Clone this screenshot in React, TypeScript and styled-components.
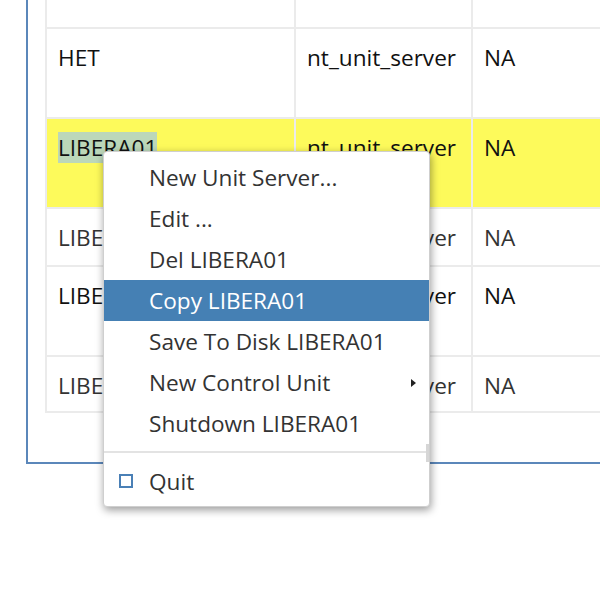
import React from "react";
import styled, { createGlobalStyle } from "styled-components";

const Global = createGlobalStyle`
  html, body { margin: 0; padding: 0; background: #fff; overflow: hidden; }
  body { font-family: "Open Sans", "Noto Sans", sans-serif; width: 600px; height: 590px; }
`;

const Page = styled.div`
  position: relative;
  width: 600px;
  height: 590px;
  overflow: hidden;
`;

const Frame = styled.div`
  margin: -82px 0 0 26px;
  width: 700px;
  border: 2px solid #5b87ba;
  padding: 0 0 49px 17px;
`;

const Table = styled.div`
  display: grid;
  grid-template-columns: 249px 177px 1fr;
  border-left: 2px solid #ebebeb;
`;

const Cell = styled.div<{ $h: number; $bg?: string; $color?: string }>`
  height: ${(p) => p.$h}px;
  box-sizing: content-box;
  background: ${(p) => p.$bg || "#fff"};
  color: ${(p) => p.$color || "#111"};
  border-bottom: 2px solid #ebebeb;
  border-right: 2px solid #ebebeb;
  padding: 13px 0 0 11px;
  font-size: 22.6px;
  line-height: 32px;
  white-space: nowrap;
  overflow: hidden;
`;

const Selected = styled.span`
  background: #bcd7b9;
`;

const Menu = styled.div`
  position: absolute;
  left: 103px;
  top: 151px;
  width: 327px;
  box-sizing: border-box;
  background: #fff;
  border: 1px solid #cfcfcf;
  border-radius: 4px;
  box-shadow: 1px 3px 8px rgba(0, 0, 0, 0.4);
  padding: 5px 0 4px 0;
  font-size: 22.6px;
  color: #333;
`;

const Item = styled.div<{ $active?: boolean }>`
  position: relative;
  height: 41px;
  display: flex;
  align-items: center;
  padding-left: 45px;
  background: ${(p) => (p.$active ? "#4580b4" : "transparent")};
  color: ${(p) => (p.$active ? "#fff" : "#333")};
  white-space: nowrap;
`;

const Arrow = styled.span`
  position: absolute;
  right: 13px;
  top: 17px;
  width: 0;
  height: 0;
  border-top: 4px solid transparent;
  border-bottom: 4px solid transparent;
  border-left: 5px solid #222;
`;

const Separator = styled.div`
  height: 2px;
  background: #e3e3e3;
  margin: 7px 0 8px 0;
`;

const Check = styled.span`
  position: absolute;
  left: 15px;
  top: 13px;
  width: 10px;
  height: 10px;
  border: 2px solid #4a80b6;
`;

const Grip = styled.span`
  position: absolute;
  right: 0;
  top: 292px;
  width: 3px;
  height: 18px;
  background: #d6d6d6;
`;

type Row = { h: number; name: string; type: string; status: string; bg?: string; color?: string; sel?: boolean };

const rows: Row[] = [
  { h: 94, name: "", type: "", status: "" },
  { h: 75, name: "HET", type: "nt_unit_server", status: "NA" },
  { h: 75, name: "LIBERA01", type: "nt_unit_server", status: "NA", bg: "#fdfa5b", sel: true },
  { h: 43, name: "LIBERA01", type: "nt_unit_server", status: "NA", color: "#333" },
  { h: 75, name: "LIBERA01", type: "nt_unit_server", status: "NA" },
  { h: 41, name: "LIBERA01", type: "nt_unit_server", status: "NA", color: "#333" },
];

export default function App() {
  return (
    <Page>
      <Global />
      <Frame>
        <Table>
          {rows.map((r, i) => (
            <React.Fragment key={i}>
              <Cell $h={r.h} $bg={r.bg} $color={r.color}>
                {r.sel ? <Selected>{r.name}</Selected> : r.name}
              </Cell>
              <Cell $h={r.h} $bg={r.bg} $color={r.color}>{r.type}</Cell>
              <Cell $h={r.h} $bg={r.bg} $color={r.color}>{r.status}</Cell>
            </React.Fragment>
          ))}
        </Table>
      </Frame>
      <Menu>
        <Item>New Unit Server...</Item>
        <Item>Edit ...</Item>
        <Item>Del LIBERA01</Item>
        <Item $active>Copy LIBERA01</Item>
        <Item>Save To Disk LIBERA01</Item>
        <Item>
          New Control Unit
          <Arrow />
        </Item>
        <Item>Shutdown LIBERA01</Item>
        <Separator />
        <Item>
          <Check />
          Quit
        </Item>
        <Grip />
      </Menu>
    </Page>
  );
}
